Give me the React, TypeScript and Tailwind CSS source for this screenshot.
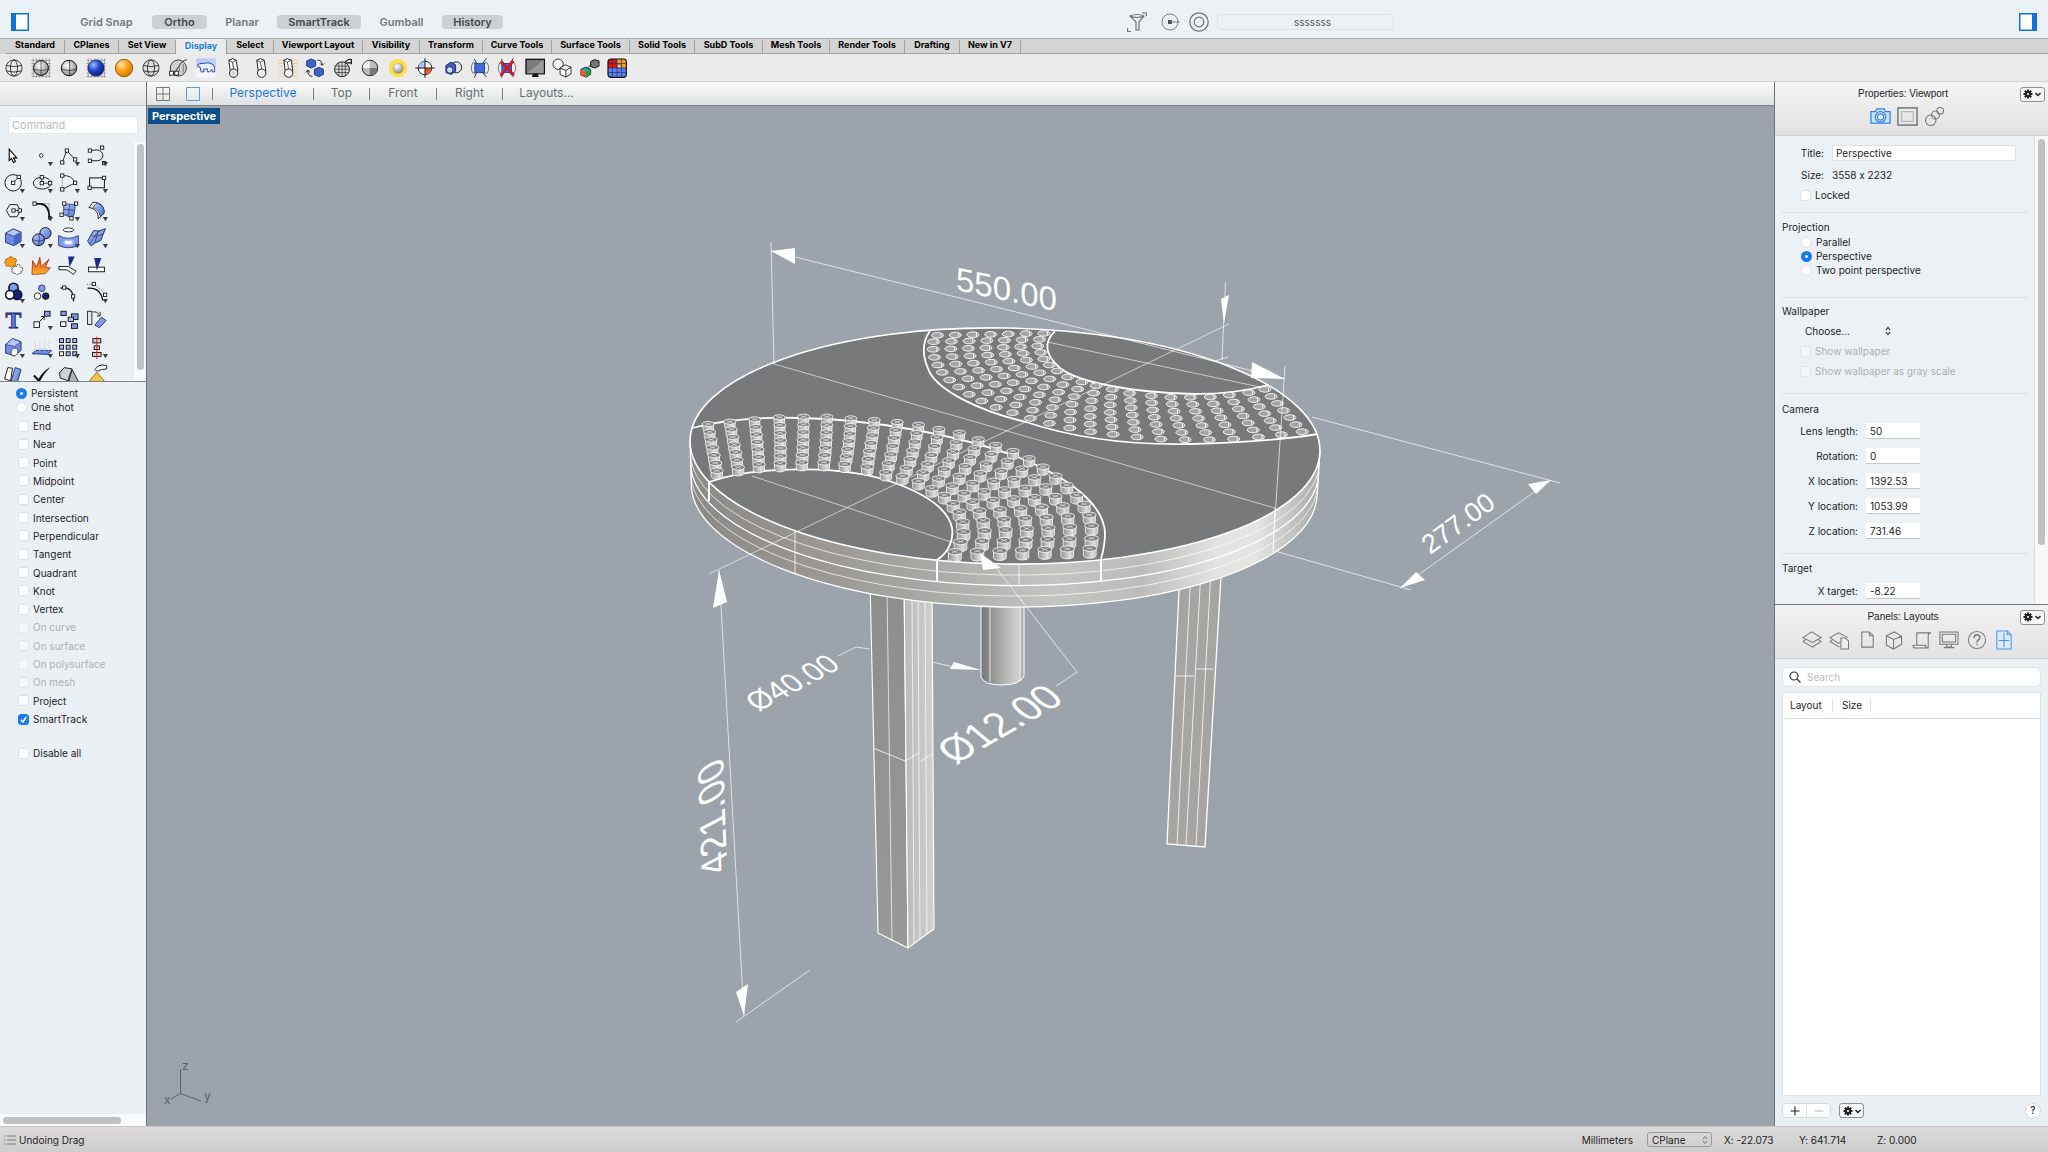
import React, { ReactNode } from "react";

/* ---------- small shared drawing helpers ---------- */

const Node = ({ x, y, s = 5 }: { x: number; y: number; s?: number }) => (
  <rect x={x - s} y={y - s} width={s * 2} height={s * 2} fill="#fff" stroke="#111" strokeWidth={2.6} />
);
const Drop = () => <path d="M60 61H76L68 74Z" fill="#3a3f45" />;

const Defs = () => (
  <svg width="0" height="0" className="absolute" aria-hidden="true">
    <defs>
      <linearGradient id="blu" x1="0" y1="0" x2="1" y2="1">
        <stop offset="0" stopColor="#b9cbfa" />
        <stop offset="1" stopColor="#4f6fd0" />
      </linearGradient>
      <radialGradient id="gry" cx=".4" cy=".35" r=".65">
        <stop offset="0" stopColor="#fff" />
        <stop offset="1" stopColor="#8a8a8a" />
      </radialGradient>
      <radialGradient id="sph" cx=".35" cy=".3" r=".75">
        <stop offset="0" stopColor="#9db8ff" />
        <stop offset=".5" stopColor="#1f46c9" />
        <stop offset="1" stopColor="#0b1f7a" />
      </radialGradient>
      <radialGradient id="org" cx=".35" cy=".3" r=".75">
        <stop offset="0" stopColor="#ffe2a0" />
        <stop offset=".5" stopColor="#f9a11b" />
        <stop offset="1" stopColor="#d87c00" />
      </radialGradient>
      <linearGradient id="fire" x1="0" y1="0" x2="0" y2="1">
        <stop offset="0" stopColor="#e0451b" />
        <stop offset="1" stopColor="#ffb52e" />
      </linearGradient>
      <linearGradient id="rim" gradientUnits="userSpaceOnUse" x1="690" y1="0" x2="1320" y2="0">
        <stop offset="0" stopColor="#8b8a87" />
        <stop offset=".17" stopColor="#98948f" />
        <stop offset=".38" stopColor="#a8a8a4" />
        <stop offset=".58" stopColor="#c4c4c1" />
        <stop offset=".72" stopColor="#bcbcba" />
        <stop offset=".84" stopColor="#e4e3e1" />
        <stop offset=".9" stopColor="#e6e5e4" />
        <stop offset=".96" stopColor="#c2c2c0" />
        <stop offset="1" stopColor="#a9a9a8" />
      </linearGradient>
      <linearGradient id="tube" x1="0" y1="0" x2="1" y2="0">
        <stop offset="0" stopColor="#777" />
        <stop offset=".45" stopColor="#a9a9a8" />
        <stop offset=".85" stopColor="#d0d0ce" />
        <stop offset="1" stopColor="#a5a5a5" />
      </linearGradient>
      <linearGradient id="peg" x1="0" y1="0" x2="1" y2="0">
        <stop offset="0" stopColor="#8f8f8e" />
        <stop offset=".7" stopColor="#dededc" />
        <stop offset="1" stopColor="#b5b5b4" />
      </linearGradient>
      <linearGradient id="legA" x1="0" y1="0" x2="0" y2="1">
        <stop offset="0" stopColor="#8d8d8b" />
        <stop offset="1" stopColor="#989896" />
      </linearGradient>
      <linearGradient id="legB" x1="0" y1="0" x2="1" y2="0">
        <stop offset="0" stopColor="#b9b9b7" />
        <stop offset="1" stopColor="#d2d1ce" />
      </linearGradient>
    </defs>
  </svg>
);

/* ---------- left tool palette ---------- */

const tools: { label: string; icon: ReactNode }[] = [
  { label: "Select", icon: <path d="M28 22V56L35 50L41 62L47 59L41 48H51Z" fill="#fff" stroke="#111" strokeWidth={3.5} /> },
  { label: "Point", icon: <><circle cx={40} cy={41} r={5.5} fill="#fff" stroke="#111" strokeWidth={2.6} /><Drop /></> },
  { label: "Polyline", icon: <><path d="M22 62L36 26L61 54" fill="none" stroke="#111" strokeWidth={2.6} /><Node x={22} y={62} /><Node x={36} y={26} /><Node x={61} y={53} /><Drop /></> },
  { label: "Curve", icon: <><path d="M21 26L44 24C66 27 66 55 44 57H21" fill="none" stroke="#111" strokeWidth={2.8} /><Node x={21} y={26} /><Node x={58} y={17} /><Node x={21} y={57} /><Node x={64} y={64} /><Drop /></> },
  { label: "Circle", icon: <><circle cx={40} cy={42} r={25} fill="none" stroke="#111" strokeWidth={2.8} /><path d="M40 42L57 24" stroke="#111" strokeWidth={2.4} /><Node x={40} y={42} /><Node x={57} y={24} /><Drop /></> },
  { label: "Ellipse", icon: <><ellipse cx={43} cy={43} rx={27} ry={18} fill="none" stroke="#111" strokeWidth={2.8} /><path d="M42 25V43H66" fill="none" stroke="#111" strokeWidth={2.4} /><Node x={42} y={25} /><Node x={42} y={43} /><Node x={67} y={43} /><Drop /></> },
  { label: "Arc", icon: <><path d="M22 20Q52 18 61 42L22 62" fill="none" stroke="#111" strokeWidth={2.6} /><path d="M22 20V62" stroke="#111" strokeWidth={2} strokeDasharray="3 4" /><Node x={22} y={20} /><Node x={22} y={62} /><Node x={61} y={42} /><Drop /></> },
  { label: "Rectangle", icon: <><rect x={20} y={27} width={45} height={30} fill="none" stroke="#111" strokeWidth={3} /><Node x={20} y={57} /><Node x={64} y={27} /><Drop /></> },
  { label: "Polygon", icon: <><path d="M30 23H52L62 41L52 60H30L19 41Z" fill="none" stroke="#111" strokeWidth={2.8} /><path d="M41 41H60" stroke="#111" strokeWidth={2.4} /><Node x={41} y={41} /><Node x={60} y={41} /><Drop /></> },
  { label: "Fillet curves", icon: <><path d="M38 20H64V48" fill="none" stroke="#9aa0a6" strokeWidth={2.4} /><path d="M22 21H38C56 22 64 34 65 62" fill="none" stroke="#111" strokeWidth={5} /><Node x={20} y={20} /><Node x={66} y={63} s={4} /><Drop /></> },
  { label: "Surface", icon: <><path d="M28 22C42 20 52 24 63 22C58 36 62 54 52 63C42 62 32 52 22 54C30 46 24 32 28 22Z" fill="url(#blu)" stroke="#1b2b66" strokeWidth={2.4} /><path d="M45 22C42 36 44 52 37 56M26 38C40 36 50 42 59 40" fill="none" stroke="#1b2b66" strokeWidth={2} /><Node x={28} y={20} /><Node x={64} y={20} /><Node x={20} y={54} /><Node x={50} y={65} /><Drop /></> },
  { label: "Sweep", icon: <><path d="M18 32L30 16C52 16 66 28 64 50L46 66C48 46 36 34 18 32Z" fill="#fff" stroke="#111" strokeWidth={2.8} /><path d="M30 32L42 18C54 22 64 32 64 48L52 58C50 44 42 36 30 32Z" fill="url(#blu)" stroke="#1b2b66" strokeWidth={2} /><Drop /></> },
  { label: "Box", icon: <><path d="M17 28L40 15L64 25V53L42 66L17 56Z" fill="#6f8cec" stroke="#1b2b66" strokeWidth={2.6} /><path d="M17 28L40 15L64 25L42 37Z" fill="#b8c8fb" stroke="#1b2b66" strokeWidth={2} /><path d="M42 37L64 25V53L42 66Z" fill="#4865c4" /><Drop /></> },
  { label: "Sphere", icon: <><circle cx={53} cy={28} r={17} fill="url(#blu)" stroke="#111" strokeWidth={3} /><circle cx={32} cy={48} r={18} fill="url(#blu)" stroke="#111" strokeWidth={3} /><path d="M32 30Q38 46 32 66M14 48Q32 56 50 48" fill="none" stroke="#1b2b66" strokeWidth={2} /><Drop /></> },
  { label: "Surface from curves", icon: <><ellipse cx={41} cy={18} rx={16} ry={6} fill="#fff" stroke="#111" strokeWidth={2.6} /><path d="M11 35Q40 52 71 35V66Q40 78 11 66Z" fill="#7f9aef" stroke="#1b2b66" strokeWidth={2.4} /><ellipse cx={41} cy={56} rx={14} ry={7} fill="#fff" stroke="#a9bcf7" strokeWidth={5} /><Drop /></> },
  { label: "Mesh", icon: <><path d="M14 52L32 20Q48 26 68 14L54 50Q36 56 24 66Z" fill="url(#blu)" stroke="#1b2b66" strokeWidth={2.8} /><path d="M23 36Q42 40 62 30M46 22L36 58M20 60L50 18" fill="none" stroke="#1b2b66" strokeWidth={2} /><Drop /></> },
  { label: "Join", icon: <><path d="M16 28Q16 18 26 20Q30 10 38 16Q40 22 48 20Q54 28 46 32Q52 44 40 42Q34 50 28 42Q16 46 18 36Q10 32 16 28Z" fill="#f9a11b" stroke="#9c5a00" strokeWidth={2.4} /><path d="M36 52Q42 42 50 44Q52 34 60 40Q60 48 68 48Q70 58 64 58Q66 68 56 66Q50 72 46 64Q34 66 36 52Z" fill="#fff" stroke="#111" strokeWidth={2.6} strokeDasharray="5 2" /></> },
  { label: "Explode", icon: <path d="M12 68L14 26L26 46L36 16L40 44L64 22L52 46L68 48L52 66Z" fill="url(#fire)" stroke="#a33406" strokeWidth={2.4} /> },
  { label: "Trim", icon: <><path d="M12 44H40L64 58L56 68L36 54H12Z" fill="#fff" stroke="#111" strokeWidth={2.8} /><path d="M40 14H60L44 46Z" fill="#1a2c86" /></> },
  { label: "Split", icon: <><rect x={17} y={46} width={48} height={14} fill="#fff" stroke="#111" strokeWidth={2.8} /><path d="M34 18H56L42 56Z" fill="#1a2c86" /></> },
  { label: "Boolean union", icon: <><circle cx={41} cy={27} r={14} fill="#7f9aef" stroke="#0a1230" strokeWidth={5} /><circle cx={52} cy={48} r={14} fill="#14236e" stroke="#0a1230" strokeWidth={5} /><circle cx={30} cy={48} r={13} fill="#fff" stroke="#0a1230" strokeWidth={5} /><Drop /></> },
  { label: "Group", icon: <><circle cx={42} cy={28} r={10} fill="#7f9aef" stroke="#1b2b66" strokeWidth={2.6} /><circle cx={29} cy={52} r={10} fill="#fff" stroke="#111" strokeWidth={2.6} /><circle cx={54} cy={52} r={10} fill="#14236e" stroke="#111" strokeWidth={2.6} /></> },
  { label: "Edit points", icon: <><path d="M16 28C44 20 58 40 56 68" fill="none" stroke="#111" strokeWidth={4} /><Node x={28} y={26} /><Node x={55} y={53} /></> },
  { label: "Adjust end", icon: <><path d="M14 28C40 26 56 40 60 66" fill="none" stroke="#111" strokeWidth={4} /><path d="M12 16H34L62 40" fill="none" stroke="#111" strokeWidth={2} strokeDasharray="3 4" /><Node x={33} y={15} /><Node x={67} y={48} /><Drop /></> },
  { label: "Text", icon: <text x={41} y={66} textAnchor="middle" fontFamily="Liberation Serif, serif" fontWeight="bold" fontSize={72} fill="#5b7be0" stroke="#14236e" strokeWidth={2.5}>T</text> },
  { label: "Scale", icon: <><rect x={18} y={48} width={17} height={17} fill="#fff" stroke="#111" strokeWidth={2.8} /><rect x={50} y={16} width={17} height={15} fill="#7f9aef" stroke="#111" strokeWidth={2.8} /><path d="M36 46L48 34M40 32H49V42" fill="none" stroke="#111" strokeWidth={3} /><Drop /></> },
  { label: "Copy", icon: <><rect x={18} y={16} width={16} height={13} fill="#7f9aef" stroke="#111" strokeWidth={2.8} /><rect x={50} y={24} width={20} height={17} fill="#7f9aef" stroke="#111" strokeWidth={2.8} /><rect x={40} y={34} width={16} height={13} fill="#a9bcf7" stroke="#111" strokeWidth={2.8} /><rect x={17} y={48} width={16} height={14} fill="#fff" stroke="#111" strokeWidth={2.8} /><rect x={50} y={54} width={18} height={14} fill="#7f9aef" stroke="#111" strokeWidth={2.8} /></> },
  { label: "Rotate", icon: <><rect x={14} y={16} width={13} height={40} fill="#e6e8ea" stroke="#111" strokeWidth={2.6} /><path d="M36 58L56 34L70 44L50 66Z" fill="#7f9aef" stroke="#1b2b66" strokeWidth={2.6} /><path d="M30 18Q44 16 50 28M52 18V30H42" fill="none" stroke="#111" strokeWidth={2.6} /></> },
  { label: "Solid tools", icon: <><path d="M17 32L38 14L64 24V50L44 66L17 58Z" fill="#6f8cec" stroke="#1b2b66" strokeWidth={2.6} /><path d="M17 32L38 14L64 24L44 38Z" fill="#b8c8fb" stroke="#1b2b66" strokeWidth={2} /><path d="M34 50Q44 38 54 46V60L44 67L34 63Z" fill="#fff" stroke="#111" strokeWidth={2} /><Drop /></> },
  { label: "Project", icon: <><path d="M12 60L24 50H72L60 62Z" fill="#6f8cec" stroke="#1b2b66" strokeWidth={2.6} /><path d="M22 50V20M36 50V18M50 50V18M64 50V20" stroke="#dbe2ea" strokeWidth={4} /><path d="M17 44L22 52L27 44M31 44L36 52L41 44M45 44L50 52L55 44" fill="none" stroke="#a3adbb" strokeWidth={2} /><Drop /></> },
  { label: "Array", icon: <>{[16, 36, 56].map((y) => [16, 36, 56].map((x) => <rect key={x + "-" + y} x={x - 2} y={y - 2} width={12} height={12} fill={x === 16 && y === 56 ? "#fff" : "#a9bcf7"} stroke="#111" strokeWidth={2.8} />))}<Drop /></> },
  { label: "Align", icon: <><rect x={30} y={14} width={24} height={13} fill="#e8c7c7" stroke="#111" strokeWidth={2.8} /><rect x={34} y={36} width={16} height={11} fill="#e8c7c7" stroke="#111" strokeWidth={2.8} /><rect x={29} y={56} width={26} height={12} fill="#e8c7c7" stroke="#111" strokeWidth={2.8} /><path d="M42 8V76" stroke="#d02020" strokeWidth={3} /><Drop /></> },
  { label: "Blocks", icon: <><path d="M14 54L24 20L38 22L32 60Z" fill="#fff" stroke="#111" strokeWidth={2.8} /><path d="M34 60L46 20L64 26L52 66Z" fill="url(#blu)" stroke="#1b2b66" strokeWidth={2.8} /></> },
  { label: "Check", icon: <path d="M16 46L20 42L32 54Q46 30 68 18Q46 40 34 66Z" fill="#111" /> },
  { label: "Primitives", icon: <><path d="M14 36L28 20L52 24L44 44L40 60L16 52Z" fill="#cfd2d5" stroke="#111" strokeWidth={2.8} /><path d="M52 26L70 60Q56 70 42 60Z" fill="#aeb2b6" stroke="#111" strokeWidth={2.6} /></> },
  { label: "Render", icon: <><path d="M20 60L42 34L64 60Q42 72 20 60Z" fill="#f5c54a" stroke="#8a6400" strokeWidth={2.6} /><path d="M36 26Q44 12 58 12L72 14V24L56 26Q46 32 40 30Z" fill="#fff" stroke="#111" strokeWidth={2.8} /></> },
];

/* ---------- display toolbar ---------- */

const Globe = ({ fill = "none", c = "#222" }: { fill?: string; c?: string }) => (
  <g fill="none" stroke={c} strokeWidth={2.6}>
    <circle cx={30} cy={30} r={25} fill={fill} />
    <ellipse cx={30} cy={30} rx={11} ry={25} />
    <path d="M6 22Q30 30 54 22M6 39Q30 46 54 39" />
  </g>
);
const Hatch = ({ c = "#555" }: { c?: string }) => (
  <path d="M6 0V60M16 0V60M26 0V60M36 0V60M46 0V60M56 0V60M0 6H60M0 16H60M0 26H60M0 36H60M0 46H60M0 56H60" stroke={c} strokeWidth={1.3} />
);
const Peg = ({ top }: { top: string }) => (
  <g stroke="#111" strokeWidth={2.8}>
    <path d="M17 6L28 1L40 6L45 40L22 42Z" fill={top} />
    <circle cx={32} cy={46} r={13} fill="#f2f2f2" />
    <path d="M17 6L28 12L40 6M28 12L32 33" fill="none" strokeWidth={2} />
  </g>
);
const Cam = () => (
  <g stroke="#111" strokeWidth={2.6}>
    <path d="M20 16L12 2M38 16L50 0M20 44L12 60M38 44L50 58" />
    <path d="M16 14H8Q-2 30 8 46H16Z" fill="#e8ecf8" strokeWidth={1.6} />
    <path d="M42 14H52Q62 30 52 46H42Z" fill="#e8ecf8" strokeWidth={1.6} />
    <rect x={14} y={16} width={30} height={28} fill="#3f6ad8" stroke="#1b3a94" />
  </g>
);

const displayTools: { label: string; icon: ReactNode }[] = [
  { label: "Wireframe", icon: <Globe /> },
  { label: "Shaded with grid", icon: <><Hatch /><circle cx={30} cy={30} r={23} fill="url(#gry)" stroke="#111" strokeWidth={3} /><path d="M30 7V53M8 34Q30 42 52 34" fill="none" stroke="#333" strokeWidth={2} /></> },
  { label: "Shaded", icon: <><circle cx={30} cy={30} r={24} fill="url(#gry)" stroke="#111" strokeWidth={3} /><path d="M32 6V54M7 34Q30 42 54 34" fill="none" stroke="#333" strokeWidth={2.4} /></> },
  { label: "Rendered with grid", icon: <><Hatch /><circle cx={30} cy={30} r={25} fill="url(#sph)" stroke="#0a1550" strokeWidth={2} /></> },
  { label: "Rendered", icon: <circle cx={30} cy={30} r={27} fill="url(#org)" stroke="#7a5200" strokeWidth={2.6} /> },
  { label: "Ghosted", icon: <Globe fill="#dedede" /> },
  { label: "X-Ray", icon: <><circle cx={31} cy={30} r={25} fill="#d2d2d2" stroke="#222" strokeWidth={2.6} /><path d="M4 54Q24 44 32 26Q40 8 58 4" fill="none" stroke="#111" strokeWidth={2.6} /><Node x={10} y={46} s={6} /><Node x={26} y={46} s={6} /><path d="M34 26V40M46 18V44" stroke="#444" strokeWidth={2} /></> },
  { label: "Arctic", icon: <><rect width={60} height={30} fill="#b9cdf5" /><rect y={30} width={60} height={30} fill="#f4f6fb" /><path d="M3 22Q8 14 22 16Q42 10 54 22Q58 30 57 42H50L48 34L42 42H34L34 33L22 34L24 42H15L12 28Z" fill="#e8effc" stroke="#20368f" strokeWidth={2.8} /></> },
  { label: "Technical", icon: <><Peg top="#fff" /><path d="M31 14V58M20 46H44" stroke="#444" strokeWidth={1.6} strokeDasharray="3 3" /></> },
  { label: "Artistic", icon: <Peg top="#fff" /> },
  { label: "Pen", icon: <><path d="M0 6H60M0 16H60M0 26H60M0 36H60M0 46H60M0 56H60" stroke="#e9c98f" strokeWidth={2.4} /><Peg top="#fff" /></> },
  { label: "Swap display", icon: <><path d="M4 8L18 2L32 8V24L18 30L4 24ZM28 34L42 28L56 34V50L42 57L28 50Z" fill="#3f62c6" stroke="#14236e" strokeWidth={2.4} /><path d="M38 6Q52 6 52 20M46 16L52 22L58 16M22 56Q6 54 8 38M2 44L8 36L14 44" fill="none" stroke="#111" strokeWidth={2.8} /></> },
  { label: "Mesh settings", icon: <><circle cx={27} cy={34} r={23} fill="#d9d9d9" stroke="#111" strokeWidth={2.8} /><path d="M6 24H48M4 34H50M7 44H47M17 14V54M27 11V57M37 14V54" stroke="#222" strokeWidth={2} /><path d="M36 12Q48 0 56 4V18M40 14H56" fill="none" stroke="#111" strokeWidth={3.6} /></> },
  { label: "Flat shade", icon: <><circle cx={30} cy={30} r={24} fill="#bdbdbd" stroke="#111" strokeWidth={2.8} /><path d="M29 7A23 23 0 0 0 7 30H29Z" fill="#f2f2f2" /><path d="M29 30H53A23 23 0 0 1 29 53Z" fill="#777" /></> },
  { label: "Highlight", icon: <><circle cx={30} cy={30} r={27} fill="#ffe32e" stroke="#f7d84a" strokeWidth={2} /><circle cx={30} cy={30} r={17} fill="url(#gry)" /></> },
  { label: "Clipping", icon: <><circle cx={30} cy={30} r={21} fill="#fff" stroke="#111" strokeWidth={2.8} /><path d="M30 9A21 21 0 0 0 9 30H30Z" fill="#a9c2ee" /><path d="M30 30H51A21 21 0 0 1 30 51Z" fill="#f0562b" /><path d="M30 0V60M0 30H60" stroke="#111" strokeWidth={3} /></> },
  { label: "Hide backfaces", icon: <><circle cx={40} cy={28} r={17} fill="#e6e6e6" stroke="#111" strokeWidth={2.8} /><path d="M8 22L24 12L38 20V40L24 50L8 44Z" fill="#3f5fae" stroke="#14236e" strokeWidth={2.8} /><circle cx={20} cy={36} r={10} fill="#cfe0ff" stroke="#14236e" strokeWidth={2.6} /></> },
  { label: "Show edges", icon: <Cam /> },
  { label: "Hide edges", icon: <><Cam /><path d="M10 10L52 52M50 8L10 54" stroke="#d8141c" strokeWidth={8} /></> },
  { label: "Full screen", icon: <><rect x={2} y={3} width={57} height={45} fill="#7b7b7b" stroke="#111" strokeWidth={4} /><path d="M4 46L57 5V46Z" fill="#9a9a9a" /><path d="M24 48H38L42 58H20Z" fill="#111" /></> },
  { label: "Silhouette", icon: <><circle cx={18} cy={18} r={16} fill="#f5f5f5" stroke="#111" strokeWidth={2.6} /><path d="M24 30L40 20L58 28V48L42 58L24 50ZM24 30L42 38L58 28M42 38V58" fill="#fff" stroke="#111" strokeWidth={2.6} /></> },
  { label: "Textures", icon: <><path d="M2 34L16 28L32 34V50L18 58L2 52Z" fill="#16b4c8" stroke="#111" strokeWidth={2.8} /><path d="M2 34L18 40V58L2 52Z" fill="#f0562b" /><path d="M18 40L32 34V50L18 58Z" fill="#22a53b" /><path d="M32 10L44 4L58 8V24L46 30L32 26Z" fill="#777" stroke="#111" strokeWidth={2.8} /><path d="M22 30L34 18" stroke="#111" strokeWidth={2.8} /></> },
  { label: "Four view", icon: <><rect x={2} y={2} width={57} height={57} rx={9} fill="#5f7fe8" /><path d="M2 30V11Q2 2 11 2H30V30Z" fill="#e0150f" /><path d="M30 2H50Q59 2 59 11V30H30Z" fill="#f0a41c" /><path d="M16 2V58M30 2V58M44 2V58M2 16H58M2 30H58M2 44H58" stroke="#1b2b66" strokeWidth={2} /><rect x={2} y={2} width={57} height={57} rx={9} fill="none" stroke="#111" strokeWidth={3.4} /><circle cx={37} cy={24} r={5} fill="#fff" stroke="#111" strokeWidth={1.5} /></> },
];

/* ---------- form controls ---------- */

const Check = ({ label, checked = false, disabled = false }: { label: string; checked?: boolean; disabled?: boolean }) => (
  <label className={"flex items-center gap-1 " + (disabled ? "text-[#abb1b6]" : "text-[#1f2326]")}>
    <span className="relative flex size-[11px] shrink-0">
      <input
        type="checkbox"
        defaultChecked={checked}
        disabled={disabled}
        className="peer size-[11px] appearance-none rounded-[3px] border border-[#dde0e4] bg-white checked:border-[#1a7bf0] checked:bg-[#1a7bf0] disabled:border-[#e2e6ea] disabled:bg-[#f3f7fa]"
      />
      <svg viewBox="0 0 11 11" className="pointer-events-none absolute inset-0 hidden size-[11px] peer-checked:block">
        <path d="M2.8 5.8L4.8 8L8.2 3" fill="none" stroke="#fff" strokeWidth={1.5} />
      </svg>
    </span>
    {label}
  </label>
);

const Radio = ({ label, name, checked = false }: { label: string; name: string; checked?: boolean }) => (
  <label className="flex h-[14px] items-center gap-1 text-[#1f2326]">
    <input
      type="radio"
      name={name}
      defaultChecked={checked}
      className="size-[11px] shrink-0 appearance-none rounded-full border border-[#e2dfe0] bg-white checked:border-4 checked:border-[#1a7bf0]"
    />
    {label}
  </label>
);

const Field = ({ label, value }: { label: string; value: string }) => (
  <label className="flex h-4 items-center">
    <span className="w-[76px] text-right">{label}</span>
    <input defaultValue={value} className="ml-2 h-4 w-[54px] border-b border-[#c3c9cd] bg-white px-1 outline-none" />
  </label>
);

const Rule = ({ className = "" }: { className?: string }) => <hr className={"border-[#d8dee2] " + className} />;

const GearButton = ({ label }: { label: string }) => (
  <button aria-label={label} className="flex h-[15px] w-[25px] items-center justify-center rounded-[3px] border border-[#8f9296] bg-[#f6f7f7]">
    <svg viewBox="0 0 22 12" className="h-3 w-[22px]">
      <g stroke="#222" strokeWidth={2}>
        <path d="M7 1.5V10.5M2.5 6H11.5M3.8 2.8L10.2 9.2M10.2 2.8L3.8 9.2" />
      </g>
      <circle cx={7} cy={6} r={3.2} fill="#222" />
      <circle cx={7} cy={6} r={1.1} fill="#f6f7f7" />
      <path d="M14.5 5L17 7.5L19.5 5" fill="none" stroke="#222" strokeWidth={1.5} />
    </svg>
  </button>
);

/* ---------- 3D viewport ---------- */

type P = [number, number];
const toPage = ([x, y]: number[]): P => [670 + x / 2.306, 230 + y / 3];

const backOuter = [[617,316],[608,335],[607,358],[610,382],[618,405],[628,427],[645,450],[666,471],[690,493],[719,513],[752,532],[790,548],[831,565],[875,580],[922,594],[970,605],[1022,613],[1077,621],[1132,627],[1188,629],[1244,629],[1300,627],[1357,621],[1410,614],[1458,605]].map(toPage);
const backInner = [[862,310],[852,328],[848,348],[855,367],[862,387],[875,405],[893,423],[917,441],[950,456],[983,467],[1020,478],[1060,490],[1110,497],[1155,502],[1200,502],[1246,501],[1290,495],[1335,488],[1372,478]].map(toPage);
const frontOuter = [[88,582],[138,575],[195,568],[252,562],[308,560],[362,560],[417,565],[471,570],[524,576],[573,584],[620,597],[667,608],[711,628],[751,645],[791,663],[828,685],[860,710],[889,737],[915,765],[938,795],[955,822],[967,855],[972,887],[972,925],[968,955]].map(toPage);
const frontInner = [[108,722],[157,712],[205,703],[254,700],[304,697],[355,697],[403,702],[455,710],[498,727],[536,738],[573,753],[604,775],[633,795],[653,820],[667,845],[675,875],[677,905],[670,935],[657,965]].map(toPage);

const along = (line: P[], t: number): P => {
  const f = t * (line.length - 1);
  const i = Math.min(Math.floor(f), line.length - 2);
  const u = f - i;
  return [line[i][0] + (line[i + 1][0] - line[i][0]) * u, line[i][1] + (line[i + 1][1] - line[i][1]) * u];
};

const arcs = (outer: P[], inner: P[]): P[] => {
  const out: P[] = [];
  for (let k = 0; k < 7; k++) {
    const n = 25 - k;
    for (let j = 0; j < n; j++) {
      const a = along(outer, j / (n - 1));
      const b = along(inner, j / (n - 1));
      out.push([a[0] + ((b[0] - a[0]) * k) / 6, a[1] + ((b[1] - a[1]) * k) / 6]);
    }
  }
  return out.sort((p, q) => p[1] - q[1]);
};
const holes = arcs(backOuter, backInner);
const pegs = arcs(frontOuter, frontInner);

const PegShape = ({ x, y }: { x: number; y: number }) => {
  const near = (y - 416) / 136;
  const r = 6 + near * 1.2;
  const b = r - 0.8;
  const h = 5 + near * 2.2;
  return (
    <g stroke="#fff" strokeWidth={0.8}>
      <path d={`M${x - b} ${y}v${h}a${b} 2.8 0 0 0 ${2 * b} 0v${-h}Z`} fill="url(#peg)" />
      <ellipse cx={x} cy={y} rx={r} ry={r * 0.42} fill="#808181" />
      <path d={`M${x - 3} ${y - 1.2}L${x + 3} ${y + 1.2}M${x + 3} ${y - 1.2}L${x - 3} ${y + 1.2}`} strokeWidth={0.5} />
    </g>
  );
};

const Viewport = () => (
  <svg viewBox="147 106 1627 1020" className="block size-full" role="img" aria-label="Perspective view of a round table with dimensions">
    {/* right leg */}
    <path d="M1180 570L1222 560L1205 847L1167 844Z" fill="#a6a5a1" stroke="#fff" strokeWidth={1.3} />
    <path d="M1191 570L1177 845M1201 570L1186 845M1211 570L1196 846" stroke="#fff" strokeWidth={0.8} />
    <path d="M1176 676H1194M1196 669H1213" stroke="#fff" strokeWidth={0.8} />
    {/* round leg */}
    <path d="M981 590V677Q984 685 1002 685Q1020 685 1024 676V590Z" fill="url(#tube)" stroke="#fff" strokeWidth={1} />
    <path d="M990 600V682M1020 600V681" stroke="#fff" strokeWidth={0.8} />
    {/* front leg */}
    <path d="M870 580L904 580L908 948L878 933Z" fill="url(#legA)" stroke="#fff" strokeWidth={1.1} />
    <path d="M904 580L932 580L934 929L908 948Z" fill="url(#legB)" stroke="#fff" strokeWidth={1.1} />
    <path d="M887 590L892 941M912 590L914 943M918 590L920 939M925 590L927 934" stroke="#fff" strokeWidth={0.7} />
    <path d="M873 748L905 761L919 753M921 761L932 754" fill="none" stroke="#fff" strokeWidth={0.8} />

    {/* table rim and top */}
    <g transform="rotate(1 1005 446)">
      <path d="M690 446L692 489A313 118 0 0 0 1318 489L1320 446Z" fill="url(#rim)" />
      <g fill="none" stroke="#fff">
        <path d="M690.5 457A314.5 118 0 0 0 1319.5 457" strokeWidth={0.7} />
        <path d="M691 467.5A314 118 0 0 0 1319 467.5" strokeWidth={1.3} />
        <path d="M691.5 478A313.5 118 0 0 0 1318.5 478" strokeWidth={0.7} />
        <path d="M690 446L692 489A313 118 0 0 0 1318 489L1320 446" strokeWidth={1.3} />
      </g>
      <ellipse cx={1005} cy={446} rx={315} ry={118} fill="#77797b" stroke="#fff" strokeWidth={1.6} />
    </g>
    <path d="M795 532V573M1019 564V586M1275 508L1273 552" stroke="#fff" strokeWidth={0.8} />
    <path d="M937 560V582M1101 559V581M709 482V501" stroke="#fff" strokeWidth={2} />

    {/* inlay borders */}
    <g fill="none" stroke="#fff" strokeWidth={1.8}>
      <path d="M709 482C760 464 850 466 895 483C925 494 948 508 952 528C954 540 948 553 937 560" />
      <path d="M692 428C730 418 770 417 800 418C870 419 960 435 1020 458C1070 478 1104 505 1105 533C1105 543 1103 552 1101 559" />
      <path d="M930 331C922 342 921 355 930 373C940 390 975 410 1026 422C1080 440 1140 445 1190 444C1240 443 1280 440 1318 434" />
      <path d="M1055 331C1044 342 1044 354 1060 368C1075 380 1120 392 1195 394C1225 394 1250 390 1268 385" />
    </g>

    {/* construction lines */}
    <g fill="none" stroke="#fff" strokeWidth={0.8} strokeOpacity={0.75}>
      <path d="M774 364L1275 508M752 476L954 543M1047 342L1260 387" />
      <path d="M1229 324L709 574" />
    </g>

    {/* perforations */}
    {holes.map(([x, y], i) => (
      <g key={i}>
        <ellipse cx={x} cy={y} rx={6} ry={2.8} fill="#a3a3a2" stroke="#fff" strokeWidth={0.9} />
        <path d={`M${x + 3.5} ${y - 1.8}V${y + 1.8}`} stroke="#fff" strokeWidth={0.9} />
      </g>
    ))}
    {/* raised pegs */}
    {pegs.map(([x, y], i) => (
      <PegShape key={i} x={x} y={y} />
    ))}

    {/* dimension lines */}
    <g fill="none" stroke="#fff" strokeWidth={0.8} strokeOpacity={0.85}>
      <path d="M771 242L774 364M771 251L1285 379M1285 366L1273 548" />
      <path d="M1225.5 282L1222 360M1215 361L1228 357" />
      <path d="M1312 417L1560 483M1275 551L1411 590M1551 480L1400 588" />
      <path d="M719 570L744 1016M736 1022L810 970" />
      <path d="M838 656L856 647L870 649M932 662L954 667" />
      <path d="M1056 686L1077 672L997 569" />
    </g>
    <g fill="#fff">
      <path d="M771 251L795 248V264Z" />
      <path d="M1285 379L1252 362L1251 378Z" />
      <path d="M1221 299L1229 295L1224 323Z" />
      <path d="M1551 480L1528 484L1536 494Z" />
      <path d="M1400 588L1416 572L1425 580Z" />
      <path d="M719 570L713 608L727 602Z" />
      <path d="M744 1016L736 992L748 984Z" />
      <path d="M981 670L954 662L950 669Z" />
      <path d="M980 553L983 570L1001 568Z" />
    </g>
    <g fill="#fff" fontFamily="Liberation Sans, Arial, sans-serif">
      <text transform="translate(956 290) skewY(12)" fontSize={33}>550.00</text>
      <text transform="translate(1430 555) rotate(-36)" fontSize={27}>277.00</text>
      <text transform="translate(727 868) rotate(-92) skewX(26)" fontSize={37}>421.00</text>
      <text transform="translate(758 712) rotate(-28) skewX(20)" fontSize={29}>Ø40.00</text>
      <text transform="translate(955 765) rotate(-30) skewX(20)" fontSize={39}>Ø12.00</text>
    </g>

    {/* axis triad */}
    <path d="M180.5 1069V1093.5L201 1101M180.5 1093.5L171 1099" fill="none" stroke="#5d6269" strokeWidth={1} />
    <g fill="#5d6269" fontFamily="Inter, sans-serif" fontSize={12}>
      <text x={182} y={1070}>z</text>
      <text x={204} y={1100}>y</text>
      <text x={164} y={1104}>x</text>
    </g>
  </svg>
);

/* ---------- page ---------- */

const modes = [
  { t: "Grid Snap", on: false, w: "w-[91px]" },
  { t: "Ortho", on: true, w: "w-[55px]" },
  { t: "Planar", on: false, w: "w-[70px]" },
  { t: "SmartTrack", on: true, w: "w-[84px]" },
  { t: "Gumball", on: false, w: "w-[81px]" },
  { t: "History", on: true, w: "w-[61px]" },
];

const tabs = [
  { t: "Standard", w: "w-[59px]" },
  { t: "CPlanes", w: "w-[54px]" },
  { t: "Set View", w: "w-[57px]" },
  { t: "Display", w: "w-[51px]" },
  { t: "Select", w: "w-[47px]" },
  { t: "Viewport Layout", w: "w-[89px]" },
  { t: "Visibility", w: "w-[57px]" },
  { t: "Transform", w: "w-[63px]" },
  { t: "Curve Tools", w: "w-[69px]" },
  { t: "Surface Tools", w: "w-[78px]" },
  { t: "Solid Tools", w: "w-[65px]" },
  { t: "SubD Tools", w: "w-[68px]" },
  { t: "Mesh Tools", w: "w-[67px]" },
  { t: "Render Tools", w: "w-[75px]" },
  { t: "Drafting", w: "w-[55px]" },
  { t: "New in V7", w: "w-[61px]" },
];

const views = [
  { t: "Perspective", w: "w-[101px]" },
  { t: "Top", w: "w-[56px]" },
  { t: "Front", w: "w-[67px]" },
  { t: "Right", w: "w-[66px]" },
  { t: "Layouts...", w: "w-[88px]" },
];

const snaps: { t: string; off?: boolean; on?: boolean }[] = [
  { t: "End" }, { t: "Near" }, { t: "Point" }, { t: "Midpoint" }, { t: "Center" }, { t: "Intersection" },
  { t: "Perpendicular" }, { t: "Tangent" }, { t: "Quadrant" }, { t: "Knot" }, { t: "Vertex" },
  { t: "On curve", off: true }, { t: "On surface", off: true }, { t: "On polysurface", off: true }, { t: "On mesh", off: true },
  { t: "Project" }, { t: "SmartTrack", on: true },
];

const panelIcons: { label: string; icon: ReactNode; active?: boolean }[] = [
  { label: "Layers", icon: <><path d="M1 8L10 2L20 8L11 13Z" /><path d="M1 12L11 18L20 12L17 10M4 10L1 12" /></> },
  { label: "Layer states", icon: <><path d="M12 13L10 14L1 8L10 3L20 8M1 12L11 18M4 10L1 12" /><path d="M12.5 8.5H17L20.5 11.5V20H12.5Z" fill="#ededed" /></> },
  { label: "Pages", icon: <><path d="M5 2H13L17 6V18H5Z" /><path d="M13 2V6H17" /></> },
  { label: "Blocks", icon: <path d="M2.5 6L11 2L18.5 6.5V15L10 20L2.5 16ZM2.5 6L10 10L18.5 6.5M10 10V20" /> },
  { label: "Script", icon: <path d="M5 16V3H20Q17 3 17 6V19H3Q1 19 1 16H14Q14 19 17 19" /> },
  { label: "Display", icon: <><path d="M1 2H20V15H1Z" /><path d="M3.5 4.5H17.5V12.5H3.5ZM8 15V18H13V15M5 18.5H16" /></> },
  { label: "Help", icon: <><circle cx={10.5} cy={10.5} r={9} /><path d="M7.5 8.5Q7.5 5 10.5 5Q13.5 5 13.5 8Q13.5 9.5 11.5 10.8Q10.5 11.5 10.5 13M10.5 14.5V16" strokeWidth={1.6} /></> },
  { label: "Layouts", active: true, icon: <><path d="M3 1H14L18 5V20H3Z" fill="#dcebfd" /><path d="M14 1V5H18M10.5 3V18M5 11H16" /></> },
];

export default function App() {
  return (
    <div className="flex h-screen flex-col overflow-hidden bg-[#ebf0f4] font-['Inter','Liberation_Sans',sans-serif] text-[10px] leading-[14px] text-[#1f2326] [font-feature-settings:'calt'_0]">
      <Defs />

      {/* title bar */}
      <header className="flex h-[38px] shrink-0 items-center bg-[#ebf1f4] pt-1.5">
        <button aria-label="Toggle left sidebar" className="ml-[11px]">
          <svg viewBox="0 0 18 18" className="size-[18px]">
            <rect x={0.75} y={0.75} width={16.5} height={16.5} fill="#fff" stroke="#1273d6" strokeWidth={1.5} />
            <rect width={5} height={18} fill="#1273d6" />
          </svg>
        </button>
        <nav className="ml-8 flex items-center text-[11px] font-semibold">
          {modes.map((m) => (
            <button key={m.t} className={m.w + " h-[14px] rounded-[4px] leading-[14px] whitespace-nowrap " + (m.on ? "bg-[#ccd0d2] text-[#44484b]" : "text-[#75797c]")}>
              {m.t}
            </button>
          ))}
        </nav>
        <div className="ml-auto flex items-center">
          <button aria-label="Selection filter">
            <svg viewBox="0 0 20 20" className="size-5" fill="none" stroke="#6d7378" strokeWidth={1.2}>
              <path d="M3 4Q10 1 17 4L12 10V18H9V10ZM3 4Q10 7 17 4M15 1H19.5V4M.5 16V19.5H4" />
            </svg>
          </button>
          <button aria-label="Record history" className="ml-3.5">
            <svg viewBox="0 0 20 20" className="size-5" fill="none" stroke="#7b8186">
              <circle cx={9} cy={10} r={8} />
              <rect x={7} y={8} width={4} height={4} fill="#50565b" stroke="none" />
              <path d="M10 10H19" />
            </svg>
          </button>
          <button aria-label="Target" className="ml-2">
            <svg viewBox="0 0 20 20" className="size-5" fill="none" stroke="#6d7378" strokeWidth={1.2}>
              <circle cx={10} cy={10} r={9.2} />
              <circle cx={10} cy={10} r={4.8} />
            </svg>
          </button>
          <input aria-label="Filter text" defaultValue="sssssss" className="ml-2 h-4 w-[177px] rounded-[4px] border border-[#dde3e7] bg-transparent pl-3.5 text-center text-[#555a5e] outline-none" />
        </div>
        <button aria-label="Toggle right sidebar" className="mr-[11px] ml-[625px]">
          <svg viewBox="0 0 18 18" className="size-[18px]">
            <rect x={0.75} y={0.75} width={16.5} height={16.5} fill="#fff" stroke="#1273d6" strokeWidth={1.5} />
            <rect x={13} width={5} height={18} fill="#1273d6" />
          </svg>
        </button>
      </header>

      {/* toolbar tabs */}
      <nav role="tablist" className="flex h-4 shrink-0 border-t border-[#a9abac] bg-[#d4d4d4] pl-[6px] text-[9px] font-bold text-black">
        {tabs.map((tab) => (
          <button
            key={tab.t}
            role="tab"
            className={
              tab.w +
              " shrink-0 rounded-t-[3px] border-r pb-[2px] whitespace-nowrap leading-[12px] " +
              (tab.t === "Display" ? "border-[#9a9a9a] bg-[#ececec] text-[#1b7fe0]" : "border-b border-[#a2a2a2]")
            }
          >
            {tab.t}
          </button>
        ))}
        <span className="grow border-b border-[#a2a2a2]" />
      </nav>
      <div className="h-7 shrink-0 border-b border-[#d2d2d2] bg-[#ebebeb] pl-1">
        <div className="flex h-full w-[623px] items-center justify-between">
          {displayTools.map((d) => (
            <button key={d.label} aria-label={d.label}>
              <svg viewBox="-1 -1 62 62" className="size-5">{d.icon}</svg>
            </button>
          ))}
        </div>
      </div>

      <div className="flex min-h-0 grow">
        {/* left column */}
        <aside className="flex w-[147px] shrink-0 flex-col border-r border-[#6c7278]">
          <div className="h-6 shrink-0 border-b border-[#c6c9cb] bg-linear-to-b from-[#f7f7f7] to-[#e4e5e6]" />
          <div className="px-2 pt-[10px] pb-2">
            <input aria-label="Command" placeholder="Command" className="block h-[18px] w-[130px] border border-[#e4e8eb] bg-white px-[3px] text-[11px] outline-none placeholder:text-[#b9bcbf]" />
          </div>
          <div className="flex h-[240px] shrink-0 overflow-hidden border-b border-[#7d8388]">
            <div className="grid h-[246px] w-[110px] grid-cols-4 content-between">
              {tools.map((t) => (
                <button key={t.label} aria-label={t.label} className="size-[27px]">
                  <svg viewBox="0 0 82 82" className="size-[27px]">{t.icon}</svg>
                </button>
              ))}
            </div>
            <div className="ml-auto w-3 bg-[#f8f9fa] pt-[2px]">
              <div className="mx-auto h-[226px] w-[7px] rounded-full bg-[#c1c1c1]" />
            </div>
          </div>
          <div className="min-h-0 grow overflow-hidden pt-1">
            <div className="pl-[16px]">
              <Radio name="snap" label="Persistent" checked />
              <Radio name="snap" label="One shot" />
            </div>
            <div className="mt-[3px] flex h-[311px] flex-col justify-between pl-[18px] leading-[18px]">
              {snaps.map((s) => (
                <Check key={s.t} label={s.t} disabled={s.off} checked={s.on} />
              ))}
            </div>
            <div className="mt-4 pl-[18px] leading-[18px]">
              <Check label="Disable all" />
            </div>
          </div>
          <div className="flex h-3 shrink-0 items-center bg-[#fafafa] pl-[3px]">
            <div className="h-[7px] w-[118px] rounded-full bg-[#c1c1c1]" />
          </div>
        </aside>

        {/* viewport column */}
        <main className="flex min-w-0 grow flex-col">
          <nav className="flex h-6 shrink-0 items-center border-b border-[#7b7f83] bg-linear-to-b from-[#fbfbfb] to-[#dfe2e2] text-[12px] text-[#6b6e70]">
            <button aria-label="Four views" className="ml-[9px]">
              <svg viewBox="0 0 14 14" className="size-[14px]" fill="none" stroke="#77797b"><path d="M.5 .5H13.5V13.5H.5ZM7 .5V13.5M.5 7H13.5" /></svg>
            </button>
            <button aria-label="Single view" className="ml-4">
              <svg viewBox="0 0 14 14" className="size-[14px]" fill="none" stroke="#5b9be4"><path d="M.5 .5H13.5V13.5H.5Z" /></svg>
            </button>
            <span className="ml-3 flex items-center">
              {views.map((v) => (
                <button key={v.t} className={v.w + " h-3 border-l border-[#7d8184] pb-[2px] leading-[10px] " + (v.t === "Perspective" ? "text-[#1b76d8]" : "")}>
                  {v.t}
                </button>
              ))}
            </span>
          </nav>
          <div className="relative min-h-0 grow bg-[#9ca3ab]">
            <Viewport />
            <span className="absolute top-[2px] left-px h-4 bg-[#0c4f8c] px-1 text-[11px] leading-4 font-bold text-white">Perspective</span>
          </div>
        </main>

        {/* right column */}
        <aside className="flex w-[274px] shrink-0 flex-col border-l border-[#6c7278]">
          <div className="flex h-[54px] shrink-0 flex-col border-b border-[#cfd2d4] bg-linear-to-b from-[#f5f5f5] to-[#e2e1e2]">
            <div className="flex h-6 items-center justify-end pr-[3px]">
              <h2 className="mx-auto pl-[11px] font-['Liberation_Sans',sans-serif] text-[10px]">Properties: Viewport</h2>
              <GearButton label="Properties options" />
            </div>
            <div className="flex items-center justify-center gap-[6px] pr-[8px]">
              <button aria-label="Viewport properties">
                <svg viewBox="0 0 22 22" className="size-[21px]" fill="none" stroke="#2f82e6" strokeWidth={1.3}>
                  <path d="M1 6H6L7 3H15L16 6H21V18H1Z" fill="#cfe3fb" />
                  <circle cx={11} cy={11.5} r={5.5} fill="#e8f2fe" />
                  <circle cx={11} cy={11.5} r={3.3} />
                </svg>
              </button>
              <button aria-label="Frame">
                <svg viewBox="0 0 22 22" className="size-[21px]" fill="none" stroke="#77797b">
                  <rect x={1} y={2} width={20} height={18} strokeWidth={1.6} />
                  <rect x={5} y={6} width={12} height={10} stroke="#a5a7a9" />
                </svg>
              </button>
              <button aria-label="Links">
                <svg viewBox="0 0 22 22" className="size-[21px]" fill="none" stroke="#77797b" strokeWidth={1.1}>
                  <circle cx={7} cy={15} r={5.5} />
                  <circle cx={12} cy={9.5} r={4.2} />
                  <circle cx={17} cy={5} r={3.5} />
                </svg>
              </button>
            </div>
          </div>
          <div className="flex h-[469px] shrink-0 overflow-hidden border-b border-[#6f757a] bg-[#ebf1f5]">
            <div className="min-w-0 grow pr-[7px] pl-[7px]">
              <label className="mt-[9px] flex h-4 items-center pr-[11px]">
                <span className="w-[42px] text-right">Title:</span>
                <input defaultValue="Perspective" className="ml-2 h-4 min-w-0 grow border border-[#dfe3e6] bg-white px-[3px] outline-none" />
              </label>
              <div className="mt-[6px] flex h-4 items-center">
                <span className="w-[42px] text-right">Size:</span>
                <span className="ml-2">3558 x 2232</span>
              </div>
              <div className="mt-1 flex h-4 items-center pl-[18px]"><Check label="Locked" /></div>
              <Rule className="mt-[9px]" />
              <h3 className="mt-[6px] h-4 leading-4">Projection</h3>
              <div className="pl-[19px]">
                <Radio name="proj" label="Parallel" />
                <Radio name="proj" label="Perspective" checked />
                <Radio name="proj" label="Two point perspective" />
              </div>
              <Rule className="mt-5" />
              <h3 className="mt-[5px] h-4 leading-4">Wallpaper</h3>
              <div className="mt-1 flex h-4 items-center pl-[23px]">
                <select aria-label="Wallpaper" className="w-[80px] appearance-none bg-transparent outline-none"><option>Choose...</option></select>
                <svg viewBox="0 0 6 10" className="h-2.5 w-1.5" fill="none" stroke="#333" strokeWidth={1.2}><path d="M1 4L3 1.5L5 4M1 6L3 8.5L5 6" /></svg>
              </div>
              <div className="mt-1 flex h-4 items-center pl-[18px]"><Check label="Show wallpaper" disabled /></div>
              <div className="mt-1 flex h-4 items-center pl-[18px]"><Check label="Show wallpaper as gray scale" disabled /></div>
              <Rule className="mt-[14px]" />
              <h3 className="mt-[7px] h-4 leading-4">Camera</h3>
              <div className="mt-[6px] flex flex-col gap-[9px]">
                <Field label="Lens length:" value="50" />
                <Field label="Rotation:" value="0" />
                <Field label="X location:" value="1392.53" />
                <Field label="Y location:" value="1053.99" />
                <Field label="Z location:" value="731.46" />
              </div>
              <Rule className="mt-[14px]" />
              <h3 className="mt-[6px] h-4 leading-4">Target</h3>
              <div className="mt-[7px]"><Field label="X target:" value="-8.22" /></div>
            </div>
            <div className="w-[14px] shrink-0 border-l border-[#dcdfe1] bg-[#f8f8f8] pt-[3px] pl-[3px]">
              <div className="h-[406px] w-[7px] rounded-full bg-[#c1c1c1]" />
            </div>
          </div>

          <div className="flex h-[54px] shrink-0 flex-col border-b border-[#cfd2d4] bg-linear-to-b from-[#f2f2f2] to-[#e4e3e4]">
            <div className="flex h-6 items-center justify-end pr-[3px]">
              <h2 className="mx-auto pl-[11px] font-['Liberation_Sans',sans-serif] text-[10px]">Panels: Layouts</h2>
              <GearButton label="Panel options" />
            </div>
            <div className="flex justify-between pt-px pr-[34px] pl-[27px]">
              {panelIcons.map((p) => (
                <button key={p.label} aria-label={p.label}>
                  <svg viewBox="0 0 21 21" className="size-[20px]" fill="none" stroke={p.active ? "#4a94e8" : "#77797b"} strokeWidth={1.1}>{p.icon}</svg>
                </button>
              ))}
            </div>
          </div>
          <div className="flex min-h-0 grow flex-col px-[7px] pt-2">
            <label className="flex h-5 shrink-0 items-center rounded-[5px] border border-[#dfe4e7] bg-white px-[6px]">
              <svg viewBox="0 0 12 12" className="size-3" fill="none" stroke="#333" strokeWidth={1.2}><circle cx={5} cy={5} r={4} /><path d="M8 8L11.5 11.5" /></svg>
              <input aria-label="Search" placeholder="Search" className="ml-[6px] min-w-0 grow bg-transparent outline-none placeholder:text-[#b9bcbf]" />
            </label>
            <div className="mt-[5px] min-h-0 grow border border-[#dde2e5] bg-white">
              <table className="w-full border-collapse text-left">
                <thead>
                  <tr className="h-[25px] border-b border-[#dadddf]">
                    <th scope="col" className="w-[49px] pl-[7px] font-normal">Layout</th>
                    <th scope="col" className="w-[38px] font-normal"><span className="block border-l border-[#e0e3e5] pl-[9px]">Size</span></th>
                    <th aria-hidden="true"><span className="block h-3.5 border-l border-[#e0e3e5]" /></th>
                  </tr>
                </thead>
              </table>
            </div>
            <div className="flex h-[30px] shrink-0 items-center pb-px">
              <div className="flex h-[15px] w-[49px] rounded-[4px] border border-[#d6dadd] bg-white">
                <button aria-label="Add" className="flex flex-1 items-center justify-center border-r border-[#e0e3e5]"><svg viewBox="0 0 10 10" className="size-2.5" stroke="#222" strokeWidth={1.1}><path d="M5 .5V9.5M.5 5H9.5" /></svg></button>
                <button aria-label="Remove" className="flex flex-1 items-center justify-center"><svg viewBox="0 0 10 10" className="size-2.5" stroke="#b9bcbe" strokeWidth={1.1}><path d="M.5 5H9.5" /></svg></button>
              </div>
              <div className="ml-2 flex"><GearButton label="Layout options" /></div>
              <button className="ml-auto size-4 rounded-full border border-[#d6dadd] bg-white leading-[13px] font-medium">?</button>
            </div>
          </div>
        </aside>
      </div>

      {/* status bar */}
      <footer className="flex h-[26px] shrink-0 items-center border-t border-[#c9c9c9] bg-linear-to-b from-[#dbd9da] to-[#cfcece] pl-1">
        <svg viewBox="0 0 12 10" className="h-2.5 w-3" stroke="#77797b" strokeWidth={1}><path d="M0 1H1.5M3 1H12M0 5H1.5M3 5H12M0 9H1.5M3 9H12" /></svg>
        <span className="ml-[3px]">Undoing Drag</span>
        <span className="ml-auto">Millimeters</span>
        <span className="relative ml-[14px] flex">
          <select aria-label="Coordinate system" className="h-[15px] w-[65px] appearance-none rounded-[3px] border border-[#9c9a98] bg-transparent px-1 outline-none"><option>CPlane</option></select>
          <svg viewBox="0 0 6 10" className="pointer-events-none absolute top-[3px] right-1 h-2.5 w-1.5" fill="none" stroke="#777" strokeWidth={1}><path d="M1 4L3 1.5L5 4M1 6L3 8.5L5 6" /></svg>
        </span>
        <span className="ml-3 w-[75px]">X: -22.073</span>
        <span className="w-[78px]">Y: 641.714</span>
        <span className="w-[171px]">Z: 0.000</span>
      </footer>
    </div>
  );
}
